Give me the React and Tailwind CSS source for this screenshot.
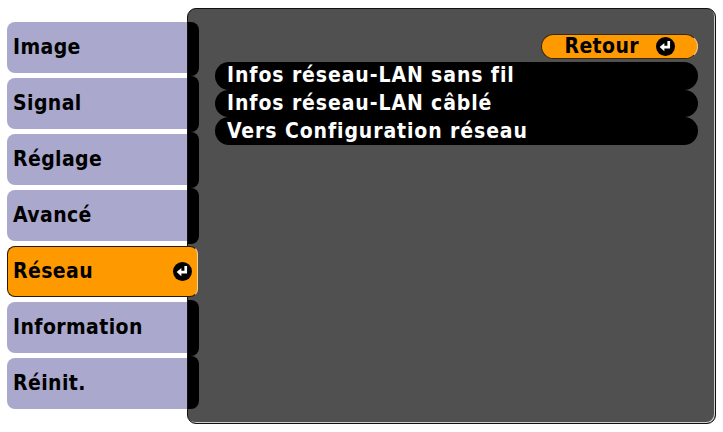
const menu = ["Image", "Signal", "Réglage", "Avancé", "Réseau", "Information", "Réinit."];
const selected = 4;

const items = [
  "Infos réseau-LAN sans fil",
  "Infos réseau-LAN câblé",
  "Vers Configuration réseau",
];

const EnterIcon = ({ size = 19 }) => (
  <svg width={size} height={size} viewBox="0 0 20 20" className="shrink-0">
    <circle cx="10" cy="10" r="10" fill="#000" />
    <path d="M13.4 4.2v6.4H8" fill="none" stroke="#fff" strokeWidth="2.8" />
    <path d="M3.8 10.6l5-4.3v8.6z" fill="#fff" />
  </svg>
);

const txt = "text-[21px] font-bold font-stretch-condensed leading-none";

const App = () => {
  return (
    <div
      className="w-[723px] h-[432px] bg-white flex items-start overflow-hidden"
      style={{ fontFamily: '"DejaVu Sans Condensed", "DejaVu Sans", sans-serif' }}
    >
      <div className="flex flex-col gap-[5px] pt-[22px] pl-[7px] w-[187px] shrink-0">
        {menu.map((label, i) =>
          i === selected ? (
            <div
              key={label}
              className="relative z-10 w-[191px] h-[51px] flex items-center justify-between pl-[5px] pr-[5px] bg-[#ff9900] rounded-[8px] border border-[#2a1a00] border-r-[#f4cf98]"
            >
              <span className={`${txt} tracking-[0.4px] text-black`}>{label}</span>
              <EnterIcon />
            </div>
          ) : (
            <div
              key={label}
              className="w-[180px] h-[51px] flex items-center pl-[6px] bg-[#aaa8cc] rounded-l-[8px]"
            >
              <span className={`${txt} tracking-[0.4px] text-black`}>{label}</span>
            </div>
          )
        )}
      </div>

      <div className="mt-[8px] w-[529px] h-[416px] shrink-0 bg-[#505050] rounded-[9px] border border-[#111] shadow-[inset_-1px_-1px_0_#cfcfcf] flex overflow-hidden">
        <div className="w-[11px] shrink-0 flex flex-col pt-[13px]">
          {menu.map((label, i) => {
            const h = i === 0 || i === menu.length - 1 ? "h-[53.5px]" : "h-[56px]";
            return (
              <div
                key={label}
                className={`${h} w-[11px] rounded-r-[8px] ${i === selected ? "bg-transparent" : "bg-black"}`}
              />
            );
          })}
        </div>
        <div className="flex-1 flex flex-col pl-[16px] pr-[17px] pt-[25px]">
          <div className="self-end w-[157px] h-[25px] flex items-center justify-end gap-[17px] pr-[22px] bg-[#ff9900] rounded-full border border-[#3a2600] border-r-[#f4cf98]">
            <span className={`${txt} tracking-[0.4px] text-black`}>Retour</span>
            <EnterIcon />
          </div>
          <div className="mt-[3px] flex flex-col">
            {items.map((t) => (
              <div key={t} className="h-[27.7px] bg-black rounded-full flex items-center pl-[12px]">
                <span className={`${txt} tracking-[0.9px] text-white`}>{t}</span>
              </div>
            ))}
          </div>
        </div>
      </div>
    </div>
  );
};

export default App;
